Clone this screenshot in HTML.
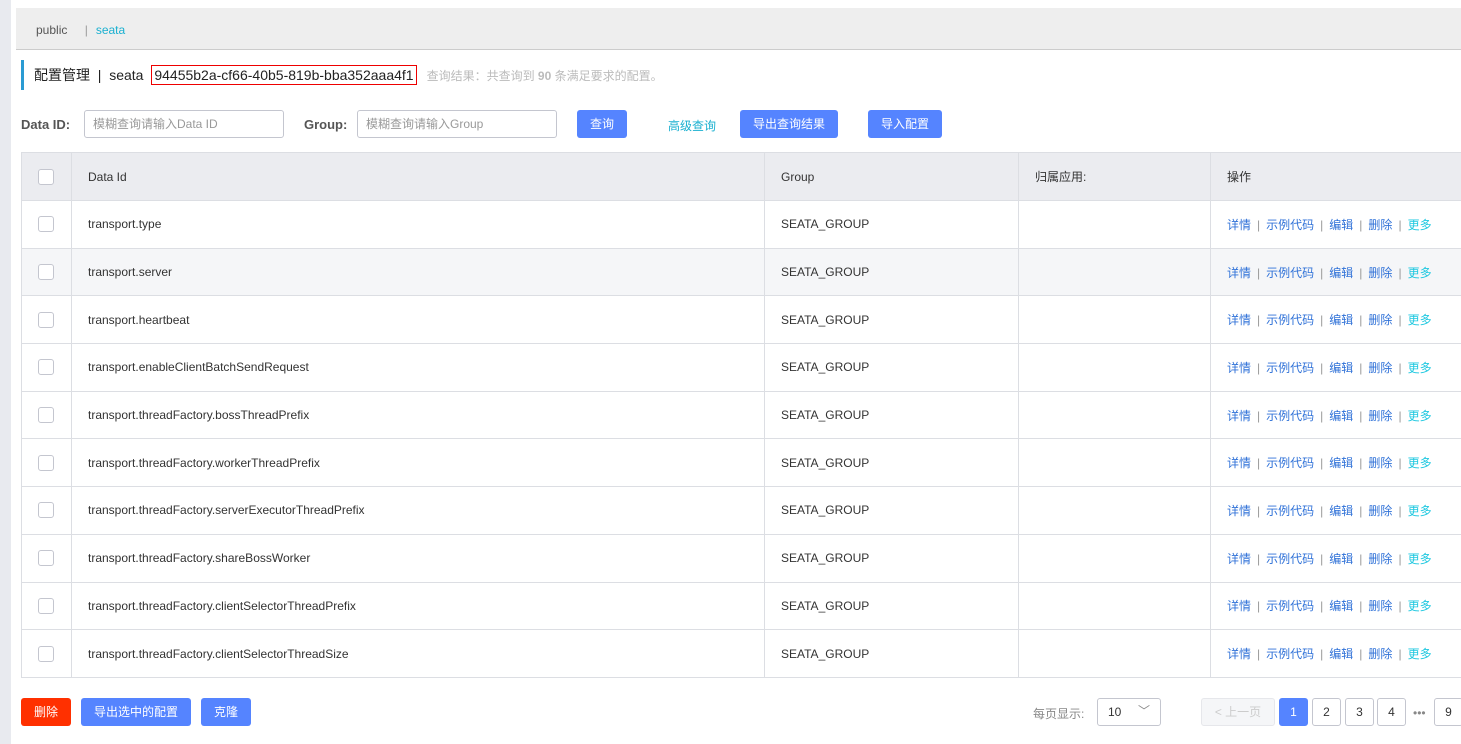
<!DOCTYPE html>
<html><head><meta charset="utf-8"><style>
*{box-sizing:border-box;margin:0;padding:0}
body{width:1461px;height:744px;overflow:hidden;background:#fff;font-family:"Liberation Sans","Noto Sans CJK SC",sans-serif;font-size:12px;color:#333;position:relative}
.side{position:absolute;left:0;top:0;width:11px;height:744px;background:#e8eaef}
.crumb{position:absolute;left:16px;top:8px;width:1445px;height:42px;background:#eee;border-bottom:1px solid #ccc;line-height:44px;padding-left:20px;color:#555}
.crumb .s{color:#1ab0d0;margin-left:8px}
.crumb .bar{color:#999;margin-left:14px}
.title{position:absolute;left:21px;top:60px;height:30px;border-left:3px solid #2a9bd3;padding-left:10px;line-height:30px;font-size:14px;color:#222}
.uuid{display:inline-block;border:1px solid #e00;height:20px;line-height:18px;padding:0 2px;margin-left:4px}
.res{font-size:12px;color:#bbb;margin-left:10px}
.lbl{position:absolute;top:117px;font-weight:bold;color:#555;font-size:13px}
.inp{position:absolute;top:110px;height:28px;border:1px solid #c4c6cf;border-radius:3px;color:#999;line-height:26px;padding-left:8px}
.btn{position:absolute;height:28px;line-height:28px;text-align:center;color:#fff;background:#5584ff;border-radius:3px;font-size:12px}
table{position:absolute;left:21px;top:152px;width:1450px;border-collapse:collapse}
td{border:1px solid #dcdee3;height:47.7px;padding-left:16px;font-size:12px}
tr.h td{background:#ebecf0;height:48px}
tr.g td{background:#f5f6f8}
.cb{display:inline-block;width:16px;height:16px;border:1px solid #c4c6cf;border-radius:3px;background:#fff;vertical-align:middle}
.op{color:#3072d8}.op i{font-style:normal;color:#999;margin:0 6px}.op b{font-weight:normal;color:#1fc8e0}
.pg{position:absolute;top:698px;height:28px;line-height:26px;border:1px solid #c4c6cf;border-radius:3px;text-align:center;font-size:12px;color:#333}
</style></head><body>
<div class="side"></div>
<div class="crumb">public <span class="bar">|</span><span class="s">seata</span></div>
<div class="title">配置管理 &nbsp;|&nbsp; seata <span class="uuid">94455b2a-cf66-40b5-819b-bba352aaa4f1</span><span class="res">查询结果：共查询到 <b>90</b> 条满足要求的配置。</span></div>
<div class="lbl" style="left:21px">Data ID:</div>
<div class="inp" style="left:84px;width:200px">模糊查询请输入Data ID</div>
<div class="lbl" style="left:304px">Group:</div>
<div class="inp" style="left:357px;width:200px">模糊查询请输入Group</div>
<div class="btn" style="left:577px;top:110px;width:50px">查询</div>
<div style="position:absolute;left:668px;top:117px;color:#1ab0d0">高级查询</div>
<div class="btn" style="left:740px;top:110px;width:98px">导出查询结果</div>
<div class="btn" style="left:868px;top:110px;width:74px">导入配置</div>
<table>
<tr class="h"><td style="width:50px"><span class="cb"></span></td><td style="width:693px">Data Id</td><td style="width:254px">Group</td><td style="width:192px">归属应用:</td><td>操作</td></tr>
<tr><td><span class="cb"></span></td><td>transport.type</td><td>SEATA_GROUP</td><td></td><td class="op">详情<i>|</i>示例代码<i>|</i>编辑<i>|</i>删除<i>|</i><b>更多</b></td></tr>
<tr class="g"><td><span class="cb"></span></td><td>transport.server</td><td>SEATA_GROUP</td><td></td><td class="op">详情<i>|</i>示例代码<i>|</i>编辑<i>|</i>删除<i>|</i><b>更多</b></td></tr>
<tr><td><span class="cb"></span></td><td>transport.heartbeat</td><td>SEATA_GROUP</td><td></td><td class="op">详情<i>|</i>示例代码<i>|</i>编辑<i>|</i>删除<i>|</i><b>更多</b></td></tr>
<tr><td><span class="cb"></span></td><td>transport.enableClientBatchSendRequest</td><td>SEATA_GROUP</td><td></td><td class="op">详情<i>|</i>示例代码<i>|</i>编辑<i>|</i>删除<i>|</i><b>更多</b></td></tr>
<tr><td><span class="cb"></span></td><td>transport.threadFactory.bossThreadPrefix</td><td>SEATA_GROUP</td><td></td><td class="op">详情<i>|</i>示例代码<i>|</i>编辑<i>|</i>删除<i>|</i><b>更多</b></td></tr>
<tr><td><span class="cb"></span></td><td>transport.threadFactory.workerThreadPrefix</td><td>SEATA_GROUP</td><td></td><td class="op">详情<i>|</i>示例代码<i>|</i>编辑<i>|</i>删除<i>|</i><b>更多</b></td></tr>
<tr><td><span class="cb"></span></td><td>transport.threadFactory.serverExecutorThreadPrefix</td><td>SEATA_GROUP</td><td></td><td class="op">详情<i>|</i>示例代码<i>|</i>编辑<i>|</i>删除<i>|</i><b>更多</b></td></tr>
<tr><td><span class="cb"></span></td><td>transport.threadFactory.shareBossWorker</td><td>SEATA_GROUP</td><td></td><td class="op">详情<i>|</i>示例代码<i>|</i>编辑<i>|</i>删除<i>|</i><b>更多</b></td></tr>
<tr><td><span class="cb"></span></td><td>transport.threadFactory.clientSelectorThreadPrefix</td><td>SEATA_GROUP</td><td></td><td class="op">详情<i>|</i>示例代码<i>|</i>编辑<i>|</i>删除<i>|</i><b>更多</b></td></tr>
<tr><td><span class="cb"></span></td><td>transport.threadFactory.clientSelectorThreadSize</td><td>SEATA_GROUP</td><td></td><td class="op">详情<i>|</i>示例代码<i>|</i>编辑<i>|</i>删除<i>|</i><b>更多</b></td></tr>
</table>
<div class="btn" style="left:21px;top:698px;width:50px;background:#ff3000">删除</div>
<div class="btn" style="left:81px;top:698px;width:110px">导出选中的配置</div>
<div class="btn" style="left:201px;top:698px;width:50px">克隆</div>
<div style="position:absolute;left:1033px;top:705px;color:#888">每页显示:</div>
<div class="pg" style="left:1097px;width:64px;text-align:left;padding-left:10px">10<span style="position:absolute;right:10px;top:-1px;color:#888">﹀</span></div>
<div class="pg" style="left:1201px;width:74px;background:#f5f6f8;color:#ccc;border-color:#e6e7eb">&lt; 上一页</div>
<div class="pg" style="left:1279px;width:29px;background:#5584ff;border-color:#5584ff;color:#fff">1</div>
<div class="pg" style="left:1312px;width:29px">2</div>
<div class="pg" style="left:1345px;width:29px">3</div>
<div class="pg" style="left:1377px;width:29px">4</div>
<div style="position:absolute;left:1413px;top:706px;color:#888">•••</div>
<div class="pg" style="left:1434px;width:29px">9</div>
</body></html>
